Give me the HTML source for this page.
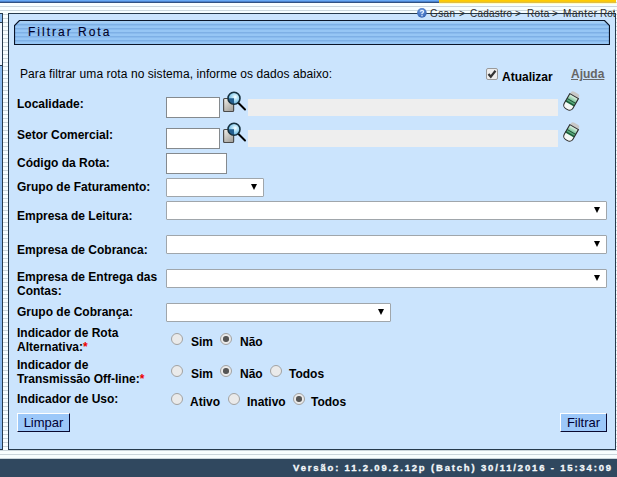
<!DOCTYPE html>
<html><head><meta charset="utf-8">
<style>
*{box-sizing:border-box}
html,body{margin:0;padding:0}
body{width:617px;height:477px;overflow:hidden;position:relative;font-family:"Liberation Sans",sans-serif;
background:#f7feff repeating-linear-gradient(to bottom,#f7feff 0,#f7feff 2px,#cad6dc 2px,#cad6dc 3px,#f7feff 3px,#f7feff 4px);}
.a{position:absolute}
.lbl{position:absolute;font-size:12px;font-weight:bold;line-height:14px;color:#000;white-space:nowrap}
.inp{position:absolute;background:#fff;border:1px solid #858a8e}
.ro{position:absolute;background:#eeeeee}
.sel{position:absolute;background:#fff;border:1px solid #a0a6ab;border-radius:1px}
.sel:after{content:"";position:absolute;right:6px;top:5px;border-left:3.5px solid transparent;border-right:3.5px solid transparent;border-top:6px solid #000}
.rad{position:absolute;width:12px;height:12px;border-radius:50%;border:1px solid #a2a2a2;background:#eaeaea}
.rad.on:after{content:"";position:absolute;left:2.25px;top:2.25px;width:5.5px;height:5.5px;border-radius:50%;background:#555}
.btn{position:absolute;background:#9cc8f9;border-style:solid;border-width:1px;border-color:#fff #0a0a30 #0a0a30 #fff;color:#000033;font-size:13px;line-height:18px;text-align:center}
.req{color:#e00}
</style></head>
<body>
<!-- top bar -->
<div class="a" style="left:0;top:0;width:439px;height:3px;background:linear-gradient(#64a8f4 0,#64a8f4 1px,#4a82cc 1px,#4a82cc 2px,#2e5283 2px)"></div>
<div class="a" style="left:439px;top:0;width:177px;height:3px;background:linear-gradient(#ffcc00 0,#ffcc00 1px,#f6c812 1px,#f6c812 2px,#e0be44 2px)"></div>
<div class="a" style="left:439px;top:3px;width:177px;height:1px;background:#ffffc4"></div>

<!-- left panel -->
<div class="a" style="left:-5px;top:13px;width:8px;height:437px;border:1px solid #263a4c;background:#8bbcf0"></div>
<div class="a" style="left:0;top:22px;width:2px;height:44px;background:#eef6ff;border-top:1px solid #263a4c;border-bottom:1px solid #263a4c"></div>

<!-- main box -->
<div class="a" style="left:8px;top:13px;width:608px;height:437px;border:1px solid #263a4c;background:#cbe4fd"></div>

<!-- breadcrumb -->
<svg class="a" style="left:416px;top:8px" width="12" height="11" viewBox="0 0 12 11">
<defs><radialGradient id="hq" cx="0.45" cy="0.3" r="0.7"><stop offset="0" stop-color="#6d9be0"/><stop offset="1" stop-color="#3463b4"/></radialGradient></defs>
<circle cx="5.9" cy="4.9" r="4.8" fill="url(#hq)"/>
<path d="M4.2 3.6 Q4.6 2.4 6 2.4 Q7.6 2.5 7.6 3.6 Q7.4 4.6 6 5.4 V6.2" fill="none" stroke="#e8f2ff" stroke-width="1.2"/>
<rect x="5.35" y="7.1" width="1.3" height="1.2" fill="#e8f2ff"/>
</svg>
<div class="a" style="left:0;top:8px;width:615px;height:12px;overflow:hidden;font-size:10px;line-height:12px;color:#2a2a2a;white-space:nowrap">
<span class="a" style="left:430px;top:0;letter-spacing:0.4px">Gsan</span>
<span class="a" style="left:459px;top:0">&gt;</span>
<span class="a" style="left:470px;top:0;letter-spacing:0.2px">Cadastro</span>
<span class="a" style="left:515px;top:0">&gt;</span>
<span class="a" style="left:527px;top:0;letter-spacing:0.4px">Rota</span>
<span class="a" style="left:552px;top:0">&gt;</span>
<span class="a" style="left:563px;top:0;letter-spacing:0.6px">Manter</span>
<span class="a" style="left:600px;top:0">Rota</span>
</div>

<!-- header tab -->
<svg class="a" style="left:14px;top:20px" width="596" height="25">
<defs><pattern id="st" width="4" height="4" patternUnits="userSpaceOnUse"><rect width="4" height="4" fill="#96c6f5"/><rect y="0" width="4" height="1" fill="#7eb0e6"/><rect y="1" width="4" height="1" fill="#8abbee"/></pattern>
<clipPath id="tc"><path d="M5.5 0.5 H590.5 L595.5 5.5 V24.5 H0.5 V5.5 Z"/></clipPath></defs>
<g clip-path="url(#tc)"><rect width="596" height="25" fill="url(#st)"/><rect x="0" y="1" width="596" height="2" fill="#a4cdf4"/></g>
<path d="M5.5 0.5 H590.5 L595.5 5.5 V24.5 H0.5 V5.5 Z" fill="none" stroke="#0a1428" stroke-width="1.2"/>
</svg>
<div class="a" style="left:28px;top:25px;font-size:12px;line-height:14px;letter-spacing:2px;color:#000028;-webkit-text-stroke:0.12px #000028;white-space:nowrap">Filtrar Rota</div>

<!-- intro -->
<div class="a" style="left:20px;top:67px;font-size:12px;line-height:14px;letter-spacing:0.07px;color:#000;white-space:nowrap">Para filtrar uma rota no sistema, informe os dados abaixo:</div>
<div class="a" style="left:486px;top:68px;width:12px;height:12px;border:1px solid #9a9a9a;border-radius:2px;background:#ededed"></div>
<svg class="a" style="left:486px;top:68px" width="12" height="12"><path d="M2.5 6 L4.8 8.8 L9.5 2.8" fill="none" stroke="#333" stroke-width="2.2"/></svg>
<div class="lbl" style="left:502px;top:70px">Atualizar</div>
<div class="lbl" style="left:571px;top:67px;color:#666;text-decoration:underline">Ajuda</div>

<!-- rows -->
<div class="lbl" style="left:17px;top:97px">Localidade:</div>
<div class="inp" style="left:166px;top:97px;width:54px;height:21px"></div>
<svg class="a" style="left:222px;top:90px" width="25" height="23" viewBox="0 0 25 23">
<defs><linearGradient id="dg90" x1="0" y1="0" x2="0.6" y2="1"><stop offset="0" stop-color="#f2f0ec"/><stop offset="1" stop-color="#a8a6a0"/></linearGradient>
<radialGradient id="lg90" cx="0.6" cy="0.4" r="0.7"><stop offset="0" stop-color="#ffffff"/><stop offset="0.25" stop-color="#c4eafa"/><stop offset="0.6" stop-color="#8ccbec"/><stop offset="1" stop-color="#5aa8d4"/></radialGradient></defs>
<rect x="1.6" y="8.5" width="10" height="13" rx="1" fill="url(#dg90)" stroke="#4a4a4a" stroke-width="1.2"/>
<line x1="16" y1="12.5" x2="23" y2="19.5" stroke="#000" stroke-width="2" stroke-linecap="round"/>
<circle cx="12" cy="8.2" r="6" fill="url(#lg90)"/>
<path d="M12 8.2 V14.2 A6 6 0 0 1 6 8.2 Z" fill="#245f90"/>
<circle cx="12" cy="8.2" r="6" fill="none" stroke="#16303f" stroke-width="1.6"/>
</svg>
<div class="ro" style="left:248px;top:99px;width:310px;height:17px"></div>
<svg class="a" style="left:558px;top:88px" width="26" height="26" viewBox="0 0 26 26">
<defs><linearGradient id="eg88" x1="0" y1="0" x2="0" y2="1"><stop offset="0" stop-color="#e6f5ec"/><stop offset="0.55" stop-color="#7cc49a"/><stop offset="1" stop-color="#1c8048"/></linearGradient></defs>
<g transform="translate(12.6 14.2) rotate(30)">
<path d="M-4.6 -7 V-8.5 Q-4.6 -11 -2 -11 H2 Q4.6 -11 4.6 -8.5 V-7 Z" fill="#c8c8c8"/>
<path d="M-5 -7 H5 V4 A4 4 0 0 1 1 8 H-1 A4 4 0 0 1 -5 4 Z" fill="#f5f7f5"/>
<rect x="-5" y="-7" width="10" height="9.2" fill="url(#eg88)"/>
<rect x="-5" y="-2" width="10" height="1" fill="#1c4a30"/>
<rect x="-5" y="0.6" width="10" height="1" fill="#1c4a30"/>
<path d="M-5 -7 H5 V4 A4 4 0 0 1 1 8 H-1 A4 4 0 0 1 -5 4 Z" fill="none" stroke="#2c2c2c" stroke-width="1.1"/>
</g></svg>

<div class="lbl" style="left:17px;top:128px">Setor Comercial:</div>
<div class="inp" style="left:166px;top:128px;width:54px;height:21px"></div>
<svg class="a" style="left:222px;top:121px" width="25" height="23" viewBox="0 0 25 23">
<defs><linearGradient id="dg121" x1="0" y1="0" x2="0.6" y2="1"><stop offset="0" stop-color="#f2f0ec"/><stop offset="1" stop-color="#a8a6a0"/></linearGradient>
<radialGradient id="lg121" cx="0.6" cy="0.4" r="0.7"><stop offset="0" stop-color="#ffffff"/><stop offset="0.25" stop-color="#c4eafa"/><stop offset="0.6" stop-color="#8ccbec"/><stop offset="1" stop-color="#5aa8d4"/></radialGradient></defs>
<rect x="1.6" y="8.5" width="10" height="13" rx="1" fill="url(#dg121)" stroke="#4a4a4a" stroke-width="1.2"/>
<line x1="16" y1="12.5" x2="23" y2="19.5" stroke="#000" stroke-width="2" stroke-linecap="round"/>
<circle cx="12" cy="8.2" r="6" fill="url(#lg121)"/>
<path d="M12 8.2 V14.2 A6 6 0 0 1 6 8.2 Z" fill="#245f90"/>
<circle cx="12" cy="8.2" r="6" fill="none" stroke="#16303f" stroke-width="1.6"/>
</svg>
<div class="ro" style="left:248px;top:130px;width:310px;height:17px"></div>
<svg class="a" style="left:558px;top:119px" width="26" height="26" viewBox="0 0 26 26">
<defs><linearGradient id="eg119" x1="0" y1="0" x2="0" y2="1"><stop offset="0" stop-color="#e6f5ec"/><stop offset="0.55" stop-color="#7cc49a"/><stop offset="1" stop-color="#1c8048"/></linearGradient></defs>
<g transform="translate(12.6 14.2) rotate(30)">
<path d="M-4.6 -7 V-8.5 Q-4.6 -11 -2 -11 H2 Q4.6 -11 4.6 -8.5 V-7 Z" fill="#c8c8c8"/>
<path d="M-5 -7 H5 V4 A4 4 0 0 1 1 8 H-1 A4 4 0 0 1 -5 4 Z" fill="#f5f7f5"/>
<rect x="-5" y="-7" width="10" height="9.2" fill="url(#eg119)"/>
<rect x="-5" y="-2" width="10" height="1" fill="#1c4a30"/>
<rect x="-5" y="0.6" width="10" height="1" fill="#1c4a30"/>
<path d="M-5 -7 H5 V4 A4 4 0 0 1 1 8 H-1 A4 4 0 0 1 -5 4 Z" fill="none" stroke="#2c2c2c" stroke-width="1.1"/>
</g></svg>

<div class="lbl" style="left:17px;top:156px">Código da Rota:</div>
<div class="inp" style="left:166px;top:153px;width:61px;height:21px"></div>

<div class="lbl" style="left:17px;top:180px">Grupo de Faturamento:</div>
<div class="sel" style="left:166px;top:178px;width:98px;height:19px"></div>

<div class="lbl" style="left:17px;top:209px">Empresa de Leitura:</div>
<div class="sel" style="left:166px;top:201px;width:441px;height:19px"></div>

<div class="lbl" style="left:17px;top:243px">Empresa de Cobranca:</div>
<div class="sel" style="left:166px;top:235px;width:441px;height:19px"></div>

<div class="lbl" style="left:17px;top:270px;line-height:14px">Empresa de Entrega das<br>Contas:</div>
<div class="sel" style="left:166px;top:269px;width:441px;height:19px"></div>

<div class="lbl" style="left:17px;top:305px">Grupo de Cobrança:</div>
<div class="sel" style="left:166px;top:303px;width:225px;height:19px"></div>

<div class="lbl" style="left:17px;top:327px;line-height:13.7px">Indicador de Rota<br>Alternativa:<span class="req">*</span></div>
<div class="rad" style="left:171px;top:333px"></div><div class="lbl" style="left:191px;top:335px">Sim</div>
<div class="rad on" style="left:220px;top:333px"></div><div class="lbl" style="left:240px;top:335px">Não</div>

<div class="lbl" style="left:17px;top:359px;line-height:13.7px">Indicador de<br>Transmissão Off-line:<span class="req">*</span></div>
<div class="rad" style="left:171px;top:365px"></div><div class="lbl" style="left:191px;top:367px">Sim</div>
<div class="rad on" style="left:220px;top:365px"></div><div class="lbl" style="left:240px;top:367px">Não</div>
<div class="rad" style="left:270px;top:365px"></div><div class="lbl" style="left:289px;top:367px">Todos</div>

<div class="lbl" style="left:17px;top:392px">Indicador de Uso:</div>
<div class="rad" style="left:171px;top:393px"></div><div class="lbl" style="left:190px;top:395px">Ativo</div>
<div class="rad" style="left:228px;top:393px"></div><div class="lbl" style="left:247px;top:395px">Inativo</div>
<div class="rad on" style="left:293px;top:393px"></div><div class="lbl" style="left:311px;top:395px">Todos</div>

<div class="btn" style="left:17px;top:413px;width:53px;height:19px">Limpar</div>
<div class="btn" style="left:560px;top:413px;width:47px;height:19px">Filtrar</div>

<!-- footer -->
<div class="a" style="left:0;top:459px;width:617px;height:18px;background:#30485f"></div>
<div class="a" style="left:293px;top:462px;font-size:9.5px;line-height:12px;font-weight:bold;letter-spacing:1.83px;color:#f4f8fb;-webkit-text-stroke:0.3px #f4f8fb;white-space:nowrap">Versão: 11.2.09.2.12p (Batch) 30/11/2016 - 15:34:09</div>
</body></html>
